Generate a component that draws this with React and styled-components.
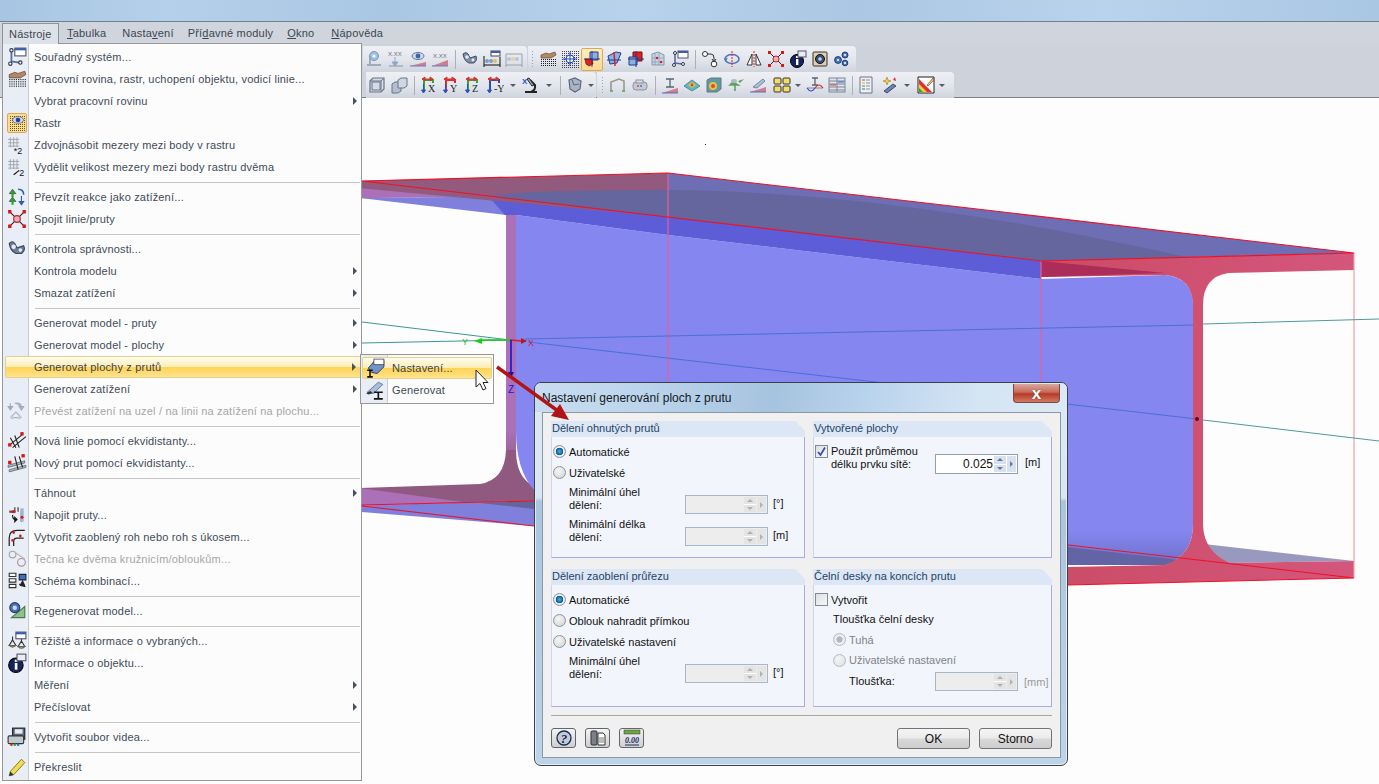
import React from 'react'
import styled, { createGlobalStyle } from 'styled-components'

const GlobalStyle = createGlobalStyle`
  html, body { margin: 0; padding: 0; background: #fff; }
  body { font-family: "Liberation Sans", Arial, sans-serif; overflow: hidden; }
  * { box-sizing: border-box; }
`

/* ---------- icons, all on an 18x18 grid ---------- */
const axisIcon = (name, c1, c2) => (
  <>
    <path d={`M4 15V4h9v3`} fill="none" stroke={c1} strokeWidth="2" />
    <path d="M2 3h9M13 3l-3-2v4zM2 3l3-2v4z" fill={c2} stroke={c2} />
    <path d="M3.5 8v8M3.5 17l-2-3h4z" fill="#2a50c8" stroke="#2a50c8" />
    <text x="8" y="16" fontSize="10" fontFamily="Liberation Serif" fill="#222">{name}</text>
  </>
)
const dots = (x, y, n, m, s, c) => {
  const out = []
  for (let i = 0; i < n; i++) for (let j = 0; j < m; j++) out.push(<rect key={`${i}-${j}`} x={x + i * s} y={y + j * s} width="1" height="1" fill={c} />)
  return out
}
const eyeShape = <><ellipse cx="9" cy="6" rx="6" ry="3.5" fill="#cfd8e8" stroke="#66788f" /><circle cx="9" cy="6" r="2.4" fill="#3d63a8" /></>

const icons = {
  coord: <><path d="M4 4v9l-1 3M4 13l7 1" fill="none" stroke="#4f6fa8" strokeWidth="1.6" /><circle cx="4" cy="3" r="1.5" fill="#fff" stroke="#334" /><circle cx="3" cy="15" r="1.5" fill="#fff" stroke="#334" /><circle cx="12" cy="14" r="1.5" fill="#fff" stroke="#334" /><rect x="7" y="1" width="10" height="7" fill="#fff" stroke="#556" /><rect x="7" y="1" width="10" height="2" fill="#3b5fa8" /></>,
  hand: <><g>{dots(2, 9, 8, 4, 2, '#222')}</g><path d="M2 5l5-2 3 1 6-2 1 3-5 3H7L2 8z" fill="#b08a68" stroke="#5c3a22" strokeWidth=".6" /></>,
  raster: <><g>{dots(2, 2, 8, 8, 2, '#6a5a20')}</g><ellipse cx="10" cy="6" rx="5.5" ry="3.4" fill="#cfd8ee" stroke="#445" strokeWidth=".6" /><circle cx="10" cy="6" r="2.3" fill="#27408a" /></>,
  gridx2: <><path d="M3 2v9M6 2v9M9 2v9M1 4h10M1 7h10M1 10h10" stroke="#9aa0a8" strokeWidth=".8" /><text x="6" y="17" fontSize="8" fill="#111">*2</text></>,
  gridd2: <><path d="M3 2v9M6 2v9M9 2v9M1 4h10M1 7h10M1 10h10" stroke="#9aa0a8" strokeWidth=".8" /><path d="M6 16l5-4" stroke="#111" /><text x="11" y="17" fontSize="8" fill="#111">2</text></>,
  react: <><path d="M5 2l-3 4h6zM5 9l-3 4h6z" fill="#3c9a3c" stroke="#1d5a1d" strokeWidth=".6" /><path d="M4 6h2v3H4zM4 13h2v3H4z" fill="#3c9a3c" /><path d="M10 2q5 0 5 5" fill="none" stroke="#2b5fb5" strokeWidth="1.4" /><path d="M13 8v7M13 16l-2-3h4z" fill="#2b5fb5" stroke="#2b5fb5" /></>,
  join: <><path d="M3 3l12 12M15 3L3 15" stroke="#222" strokeWidth="1" /><circle cx="9" cy="9" r="3" fill="#e8b0b8" stroke="#c22" /><path d="M1 1h3v3H1zM14 1h3v3h-3zM1 14h3v3H1zM14 14h3v3h-3z" fill="#d81818" /></>,
  check: <><path d="M2 4q3-3 5 0l2 4 6-2q2 4-2 7H8Q3 11 2 4z" fill="#6f7f98" stroke="#38465c" /><circle cx="6" cy="7" r="2" fill="#e8ecf4" /><circle cx="12" cy="10" r="1.6" fill="#e8ecf4" /></>,
  convert: <><path d="M3 2v5M3 8L1 5h4zM7 2q6-1 6 4M11 5h4l-2 3z" fill="#b4bcd0" stroke="#a0a8c0" /><path d="M3 15l5-5 5 5M3 15h10" fill="none" stroke="#a9b4c8" /><circle cx="5" cy="15" r="1.5" fill="#c5cede" /><circle cx="11" cy="15" r="1.5" fill="#c5cede" /></>,
  offsetLine: <><path d="M2 13L14 3M5 15L17 5M7 4l4 11M3 6l5 9" stroke="#222" /><rect x="1" y="11" width="3" height="3" fill="#d81818" /><rect x="12" y="1" width="3" height="3" fill="#d81818" /></>,
  offsetBar: <><path d="M1 11l15-4v2L1 13zM2 15l15-4v2L2 17z" fill="#aeb8c8" stroke="#555" strokeWidth=".6" /><path d="M7 3l3 12M11 3l3 10" stroke="#222" /><rect x="1" y="7" width="3" height="3" fill="#d81818" /><rect x="13" y="1" width="3" height="3" fill="#d81818" /></>,
  connectBars: <><path d="M7 2v5M10 2v4M3 6h5M13 6v9" stroke="#666" strokeWidth="1.4" /><path d="M12 3h3v12h-3z" fill="#9db6d8" /><path d="M2 5h5v2H2z" fill="#8a3a3a" /><path d="M5 9q0 5 4 4M9 13l-2-2v4z" fill="none" stroke="#111" /><circle cx="13.5" cy="11" r="1.4" fill="#d81818" /><circle cx="6" cy="6" r="1.4" fill="#d81818" /></>,
  fillet: <><path d="M2 17v-7q0-7 7-7h7M6 17v-4q0-3 3-3h6" fill="none" stroke="#222" strokeWidth="1.1" /><circle cx="6" cy="5" r="1.2" fill="#d81818" /><circle cx="12" cy="8" r="1.2" fill="#d81818" /><circle cx="5" cy="12" r="1.2" fill="#d81818" /></>,
  tangent: <><circle cx="5" cy="5" r="3" fill="none" stroke="#a5a5a5" /><circle cx="13" cy="12" r="3.5" fill="none" stroke="#b08a90" /><path d="M7 3l9 6" stroke="#b5b5b5" /></>,
  scheme: <><path d="M2 2h6v3H2zM2 7h6v3H2zM2 12h6v3H2z" fill="#fff" stroke="#333" /><path d="M11 3h6v5h-6z" fill="#3d6ec8" stroke="#223" /><path d="M11 12h5M14 9l2 5-4-1z" fill="#222" stroke="#222" /></>,
  regen: <><path d="M4 15L16 5v10z" fill="#8cc08c" stroke="#4a7a4a" /><circle cx="7" cy="6" r="4.5" fill="#4a6fb8" stroke="#223a70" /><circle cx="7" cy="6" r="2" fill="#cfd8ee" /></>,
  scales: <><path d="M5 5v3M5 8l-3 5h6zM13 5v4M13 9l-3 5h6z" fill="none" stroke="#333" /><path d="M2 13q3 3 6 0zM10 14q3 3 6 0z" fill="#c7b36a" stroke="#665" /><rect x="8" y="1" width="9" height="6" fill="#fff" stroke="#556" /><rect x="8" y="1" width="9" height="2" fill="#3b5fa8" /></>,
  info: <><circle cx="8" cy="11" r="6.5" fill="#15245c" stroke="#000" /><rect x="7" y="9" width="2.4" height="6" fill="#fff" /><rect x="7" y="6" width="2.4" height="2" fill="#fff" /><rect x="9" y="1" width="8" height="6" fill="#e8ecf4" stroke="#556" /></>,
  film: <><rect x="5" y="1" width="11" height="10" fill="#5c6a80" stroke="#222" /><rect x="7" y="2" width="7" height="4" fill="#e8ecf4" /><rect x="1" y="8" width="14" height="7" rx="1" fill="#c4c8d0" stroke="#333" /><path d="M3 15h2v2H3z" fill="#d22" /><path d="M6 15h2v2H6z" fill="#2a2" /><path d="M9 15h2v2H9z" fill="#27c" /></>,
  pencil: <><path d="M3 13L13 2l3 3L6 16l-4 1z" fill="#f2dc50" stroke="#7c6a20" strokeWidth=".8" /><path d="M2 17l1-4 3 3z" fill="#333" /></>,
  surfSet: <><path d="M3 9l6-7h8v6l-6 6-5-1z" fill="#6f94c8" stroke="#223" strokeWidth=".7" /><rect x="8" y="1" width="9" height="5" fill="#fff" stroke="#445" strokeWidth=".7" /><path d="M2 11h5M2 17h5M4.5 11v6" stroke="#111" strokeWidth="1.4" /></>,
  surfGen: <><path d="M2 11L12 2l4 2-8 8z" fill="#a6bee0" stroke="#567" strokeWidth=".7" /><path d="M8 11h8M8 17h8M12 11v6" stroke="#111" strokeWidth="1.5" /><path d="M1 12l4-2 2 2-4 1z" fill="#333" /></>,

  probe: <><circle cx="9" cy="6" r="4.5" fill="#9fc0e6" stroke="#7a98bc" /><circle cx="9" cy="6" r="1.6" fill="#fff" /><path d="M5 6v8M2 15h14" stroke="#8a9ab0" strokeWidth="1.5" /></>,
  xxDown: <><text x="1" y="6" fontSize="6" fill="#6a7080">X.XX</text><path d="M8 7v8M8 16l-3-4h6z" fill="#8ea8c8" stroke="#8ea8c8" /><path d="M2 16h14" stroke="#8a94a4" /></>,
  eyeLine: <>{eyeShape}<path d="M1 16L17 12v4z" fill="#cc7f8c" /><path d="M1 16h16" stroke="#6a7ac8" /></>,
  xxLine: <><text x="2" y="8" fontSize="6" fill="#6a7080">X.XX</text><path d="M1 16L17 10v6z" fill="#cc7f8c" /><path d="M1 16h16" stroke="#6a7ac8" /></>,
  wrench: <><path d="M2 4q3-3 5 0l2 4 6-2q2 4-2 7H8Q3 11 2 4z" fill="#7f8da6" stroke="#3f4e68" /><circle cx="6" cy="7" r="1.8" fill="#e8ecf4" /><circle cx="12" cy="10" r="1.4" fill="#e8ecf4" /></>,
  abacus: <><rect x="8" y="1" width="9" height="5" fill="#fff" stroke="#445" /><rect x="8" y="1" width="9" height="2" fill="#3b5fa8" /><path d="M1 6v11M17 7v10M1 15h16" stroke="#111" /><circle cx="4" cy="11" r="2" fill="#7f9ccf" /><circle cx="8" cy="11" r="2" fill="#7f9ccf" /><circle cx="12" cy="11" r="2" fill="#e0c060" /></>,
  abacus2: <><path d="M1 4v13M17 4v13M1 15h16M1 4h16" stroke="#9aa0aa" /><circle cx="4" cy="9" r="2" fill="#b8c4dc" /><circle cx="8" cy="9" r="2" fill="#e2d29c" /><circle cx="12" cy="9" r="2" fill="#b8c4dc" /></>,
  targetGrid: <><g>{dots(1, 1, 9, 9, 2, '#444')}</g><circle cx="9" cy="9" r="4" fill="#fff" stroke="#1e46c0" /><path d="M9 2v14M2 9h14" stroke="#1e46c0" /></>,
  planeA: <><path d="M7 2h8v8H9L7 8z" fill="#8db0de" stroke="#1d3f90" /><path d="M2 9h7l1 5-4 2-3-2z" fill="#e02020" stroke="#7a1010" strokeWidth=".7" /><path d="M9 1v16M1 9h16" stroke="#142a80" strokeWidth=".8" /></>,
  planeB: <><path d="M3 6l8-4 5 1-4 10-7 1z" fill="#8db0de" stroke="#1d3f90" /><path d="M9 2l1 14" stroke="#e02020" strokeWidth="1.5" /><path d="M2 10h14" stroke="#1d3f90" /></>,
  planeC: <><path d="M6 2h9v9H6z" fill="#e02020" stroke="#701010" /><path d="M2 7h8v8H2z" fill="#8db0de" stroke="#1d3f90" /><path d="M9 1v16M1 9h16" stroke="#1d3f90" /></>,
  gridRed: <><path d="M3 4l6-2 6 3v10H3z" fill="#c8d4e8" stroke="#8898b0" /><path d="M6 3v12M10 3v12M3 8h12M3 12h12" stroke="#8898b0" strokeWidth=".7" /><circle cx="8" cy="8" r="1.2" fill="#d82020" /><circle cx="12" cy="12" r="1.2" fill="#d82020" /></>,
  route: <><circle cx="4" cy="4" r="2.5" fill="#fff" stroke="#333" /><circle cx="13" cy="14" r="2.8" fill="#fff" stroke="#333" /><path d="M6 4h4q3 0 3 4v3M11 9l2 3 2-3" fill="none" stroke="#333" /></>,
  rotate: <><ellipse cx="9" cy="9" rx="7" ry="4.5" fill="none" stroke="#4f74b8" strokeWidth="1.6" /><path d="M9 1v16" stroke="#e02020" strokeDasharray="2 1" /><path d="M1 9l4-1-2 3z" fill="#4f74b8" /></>,
  mirror: <><path d="M7 4v11H2zM11 4v11h5z" fill="#fff" stroke="#333" /><path d="M9 1v16" stroke="#e02020" strokeDasharray="2 1" /></>,
  gearBox: <><rect x="2" y="2" width="14" height="14" rx="1" fill="#e0cfa8" stroke="#333" /><circle cx="9" cy="9" r="4.5" fill="#33507c" stroke="#111" /><circle cx="9" cy="9" r="1.8" fill="#c8d4e8" /></>,
  gears: <><circle cx="5" cy="10" r="3.4" fill="#4a78bc" stroke="#1f3a70" /><circle cx="12" cy="5" r="3" fill="#4a78bc" stroke="#1f3a70" /><circle cx="12" cy="13" r="2.8" fill="#4a78bc" stroke="#1f3a70" /><circle cx="5" cy="10" r="1" fill="#fff" /><circle cx="12" cy="5" r="1" fill="#fff" /><circle cx="12" cy="13" r="1" fill="#fff" /></>,
  wire: <><path d="M2 5l3-3h11v11l-3 3H2z" fill="#d4dbe6" stroke="#6a7488" strokeWidth="1.2" /><path d="M4 6h8v8H4zM2 5h11v11M13 5l3-3" fill="none" stroke="#6a7488" /></>,
  solid: <><path d="M2 8l3-2h6v9l-3 2H2z" fill="#b4bed0" stroke="#6a7488" /><path d="M8 4l3-2h6v8l-3 2H8z" fill="#ced6e2" stroke="#6a7488" /></>,
  axX: axisIcon('X', '#2fa53a', '#e03030'),
  axY: axisIcon('Y', '#d03030', '#e03030'),
  axZ: axisIcon('Z', '#2fa53a', '#e03030'),
  axMY: axisIcon('-Y', '#2b4f9c', '#e03030'),
  scope: <><path d="M3 16h12M9 16q5-2 4-7L8 4" fill="none" stroke="#222" strokeWidth="2" /><path d="M7 2l5 7-2 1-5-7z" fill="#9aa4b4" stroke="#222" /><text x="0" y="8" fontSize="8" fontWeight="bold" fill="#2a50c8">X</text></>,
  shell: <><path d="M3 4l6-2 6 3-1 8-5 3-5-3z" fill="#aab4c4" stroke="#5c6678" strokeWidth="1.2" /><path d="M6 4l2 5 5-1" fill="none" stroke="#5c6678" /></>,
  frame: <><path d="M2 15V6l8-3 5 2v10" fill="none" stroke="#9c9890" strokeWidth="1.6" /><path d="M1 15h3M13 15h3" stroke="#5fa05f" strokeWidth="1.6" /></>,
  pill: <><rect x="2" y="6" width="14" height="8" rx="3" fill="#c4c9d2" stroke="#8c929c" /><rect x="5" y="4" width="7" height="3" fill="#dde0e6" stroke="#8c929c" /><path d="M6 10h2" stroke="#c05050" strokeWidth="1.4" /><path d="M9 10h2" stroke="#5070c0" strokeWidth="1.4" /></>,
  beamLoad: <><path d="M9 3v8M5 3h8M5 11h8" stroke="#5a6474" strokeWidth="1.3" /><path d="M1 17L17 12v5z" fill="#cc7f8c" /><path d="M1 17h16" stroke="#5a6ac8" /></>,
  mapSurf: <><path d="M1 10l8-6 8 6-8 5z" fill="#4ec0c0" stroke="#6a8498" /><path d="M5 9l4-3 4 3-4 3z" fill="#f0b84a" /><circle cx="9" cy="9" r="1.4" fill="#e04030" /></>,
  heat: <><path d="M2 4l4-2h10v11l-4 3H2z" fill="#5c9c9a" stroke="#6a7488" /><circle cx="8" cy="10" r="4" fill="#e8c050" /><circle cx="8" cy="10" r="2" fill="#e04a30" /></>,
  loadsUp: <><path d="M6 6l-3 3h8zM8 15V9" fill="#5fa05f" stroke="#5fa05f" strokeWidth="1.6" /><path d="M17 3l-6 2 2 2z" fill="#5fa05f" /><ellipse cx="7" cy="5" rx="3" ry="2" fill="#b0b8c8" /></>,
  lens: <><path d="M4 11L14 3l2 2-8 7z" fill="#a6bee0" stroke="#788aa0" /><path d="M1 16L17 11v5z" fill="#cc7f8c" /><path d="M1 16h16" stroke="#5a6ac8" /></>,
  yellow4: <><rect x="1" y="2" width="7" height="6" rx="1" fill="#f4dc68" stroke="#333" /><rect x="10" y="2" width="7" height="6" rx="1" fill="#f4dc68" stroke="#333" /><rect x="1" y="10" width="7" height="6" rx="1" fill="#f4dc68" stroke="#333" /><rect x="10" y="10" width="7" height="6" rx="1" fill="#f4dc68" stroke="#333" /></>,
  curve: <><path d="M6 2h6M6 9h6M9 2v7" stroke="#5a6474" strokeWidth="1.3" /><path d="M1 12h16" stroke="#888" /><path d="M1 12q4 6 8 0" fill="none" stroke="#2b50c8" strokeWidth="1.2" /><path d="M9 12q4-6 8 0" fill="none" stroke="#d83030" strokeWidth="1.2" /></>,
  table: <><rect x="1" y="2" width="16" height="14" fill="#dfe4ec" stroke="#7c8696" /><path d="M1 5h16M1 8h16M1 11h16M1 14h16M9 2v14" stroke="#7c8696" /><path d="M2 9h6" stroke="#d04040" /><path d="M10 6h6" stroke="#4060c0" /></>,
  list: <><path d="M3 1h12v16H3z" fill="#eef0f4" stroke="#6e7684" /><path d="M5 4h3" stroke="#d04040" /><path d="M5 7h3" stroke="#e0b030" /><path d="M5 10h3" stroke="#40a040" /><path d="M5 13h3" stroke="#4060c0" /><path d="M9 4h4M9 7h4M9 10h4M9 13h4" stroke="#8a92a0" /></>,
  wand: <><path d="M2 15l9-7 3 2-9 7z" fill="#6484c0" stroke="#223" strokeWidth=".7" /><path d="M5 1l1 3 3 1-3 1-1 3-1-3-3-1 3-1z" fill="#f0d040" stroke="#8a7010" strokeWidth=".5" /><path d="M13 1l1 4-3-1z" fill="#d83030" /></>,
  colors: <><path d="M1 1h16v16H1z" fill="#fff" stroke="#222" /><path d="M2 16V3l13 13z" fill="#e03030" /><path d="M2 16V8l8 8z" fill="#f0d030" /><path d="M2 16v-4l4 4z" fill="#30a040" /><path d="M10 9l6-7 1 2-6 6z" fill="#f0c850" stroke="#604" strokeWidth=".5" /></>,
  help: <><circle cx="9" cy="9" r="7" fill="#c4cbd8" stroke="#1a2a50" strokeWidth="1.3" /><text x="9" y="14" fontSize="13" fontWeight="bold" fontStyle="italic" textAnchor="middle" fontFamily="Liberation Serif" fill="#14244c">?</text></>,
  doc: <><rect x="2" y="2" width="6" height="14" rx="1" fill="#7a7f88" stroke="#333" /><path d="M9 4h5l2 2v10H9z" fill="#fff" stroke="#333" /><path d="M10 9h5M10 11h5M10 13h5" stroke="#555" strokeWidth=".8" /></>,
  number: <><rect x="1" y="1" width="16" height="4" fill="#6ca63c" stroke="#335" strokeWidth=".5" /><text x="9" y="14" fontSize="8" fontStyle="italic" fontWeight="bold" textAnchor="middle" fontFamily="Liberation Serif" fill="#1a2a60">0.00</text><path d="M2 16h14" stroke="#1a2a60" /></>,
}

const Icon = ({ name, size = 18 }) => (
  <svg width={size} height={size} viewBox="0 0 18 18">
    {icons[name]}
  </svg>
)

/* ---------- window chrome ---------- */
const Screen = styled.div`
  position: relative;
  width: 1379px;
  height: 784px;
  overflow: hidden;
  display: flex;
  flex-direction: column;
  background: #ced2da;
`

const TitleStrip = styled.div`
  height: 22px;
  flex: none;
  border-bottom: 1px solid #6e8194;
  background: linear-gradient(90deg, #a7c5e2 0, #b5d0ea 12%, #a9c6e3 28%, #b8d2eb 46%, #abc7e3 62%, #bad3ec 80%, #a9c6e3 100%);
`

const MenuBar = styled.div`
  height: 22px;
  flex: none;
  display: flex;
  align-items: flex-end;
  padding-left: 2px;
  background: #d0d4dc;
`

const MenuTitle = styled.div`
  font-size: 11px;
  letter-spacing: 0.2px;
  color: #3d4653;
  height: 21px;
  line-height: 20px;
  padding: 0 7px;
  margin-right: ${p => p.$gap}px;
  ${p => p.$open && `
    position: relative;
    z-index: 6;
    width: 57px;
    background: #dde1e8;
    border: 1px solid #8e9299;
    border-bottom: none;
    padding: 0 6px;
  `}
`

const ToolArea = styled.div`
  height: 54px;
  flex: none;
  border-bottom: 1px solid #7d8187;
  background: #ced2da;
  padding-top: 2px;
`

const ToolRow = styled.div`
  display: flex;
  height: 26px;
  padding-left: ${p => p.$left}px;
`

const ToolGroup = styled.div`
  display: flex;
  align-items: center;
  height: 26px;
  padding-right: ${p => p.$pad || 0}px;
  border-radius: 0 4px 0 0;
  background: linear-gradient(180deg, #eef0f5 0, #e2e5ec 55%, #cfd3dc 100%);
`

const ToolButton = styled.div`
  width: 22px;
  height: 23px;
  flex: none;
  display: flex;
  align-items: center;
  justify-content: center;
  border-radius: 2px;
  ${p => p.$active && 'background: linear-gradient(180deg, #fdeec0, #fbd88e); border: 1px solid #e3a64e;'}
`

const ToolSep = styled.div`
  width: ${p => p.$w}px;
  height: 19px;
  flex: none;
  position: relative;
  &::after {
    content: "";
    position: absolute;
    left: 50%;
    top: 0;
    bottom: 0;
    width: 1px;
    background: #aab0ba;
  }
`

const ToolGrip = styled.div`
  width: ${p => p.$w}px;
  height: 18px;
  flex: none;
  background: radial-gradient(circle, #9ba2ad 0.8px, transparent 1px) center top / 3px 3px repeat-y;
`

const ToolDrop = styled.div`
  width: ${p => p.$w}px;
  flex: none;
  display: flex;
  justify-content: center;
  &::after {
    content: "";
    border: 3px solid transparent;
    border-top: 3px solid #555c68;
    border-bottom: none;
  }
`

const Spacer = styled.div`
  width: ${p => p.$w}px;
  flex: none;
`

const Viewport = styled.div`
  position: relative;
  flex: 1;
  background: #fdfdfd;
  overflow: hidden;
`

const ModelSvg = styled.svg`
  position: absolute;
  left: 0;
  top: 0;
  width: 1379px;
  height: 686px;
`

/* ---------- menus ---------- */
const DropMenu = styled.div`
  position: absolute;
  left: 2px;
  top: 43px;
  width: 360px;
  height: 738px;
  z-index: 5;
  padding: 2px 0 0 1px;
  border: 1px solid #979797;
  background: linear-gradient(90deg, #e9eef6 0, #e9eef6 25px, #c6cad1 25px, #c6cad1 26px, #fcfcfc 26px);
`

const MenuItem = styled.div`
  position: relative;
  height: 22px;
  display: flex;
  align-items: center;
  font-size: 11px;
  letter-spacing: 0.18px;
  color: ${p => (p.$disabled ? '#a6a6a6' : '#414b58')};
  ${p => p.$active && `
    margin: 0 0 0 1px;
    border: 1px solid #e6d08c;
    background: linear-gradient(180deg, #fefdf0 0, #fcedb6 48%, #ffd452 50%, #ffe38e 100%);
    border-radius: 2px;
    color: #3b4350;
  `}
`

const MenuIconCell = styled.div`
  width: ${p => p.$w}px;
  height: 22px;
  flex: none;
  display: flex;
  align-items: center;
  justify-content: center;
  padding-right: 2px;
`

const RasterBox = styled.div`
  width: 20px;
  height: 20px;
  display: flex;
  align-items: center;
  justify-content: center;
  border: 1px solid #e3a64e;
  border-radius: 2px;
  background: #fbdc94;
`

const MenuLabel = styled.span`
  flex: 1;
  padding-left: 3px;
  white-space: nowrap;
`

const SubArrow = styled.span`
  width: 0;
  height: 0;
  margin-right: 4px;
  border-left: 4px solid #4a5260;
  border-top: 4px solid transparent;
  border-bottom: 4px solid transparent;
`

const MenuSep = styled.div`
  height: 8px;
  margin-left: 31px;
  margin-right: 1px;
  display: flex;
  align-items: center;
  &::after {
    content: "";
    flex: 1;
    height: 1px;
    background: #c6c6c6;
  }
`

const SubMenu = styled.div`
  position: absolute;
  left: 360px;
  top: 354px;
  width: 134px;
  height: 50px;
  z-index: 7;
  padding: 2px 1px;
  border: 1px solid #979797;
  background: linear-gradient(90deg, #e9eef6 0, #e9eef6 26px, #c6cad1 26px, #c6cad1 27px, #fcfcfc 27px);
`

const SubItem = styled(MenuItem)`
  ${p => p.$active && 'margin: 0;'}
  height: 22px;
`

const SubLabel = styled.span`
  padding-left: 3px;
`

/* ---------- dialog ---------- */
const Dialog = styled.div`
  position: absolute;
  left: 534px;
  top: 382px;
  width: 534px;
  height: 384px;
  z-index: 8;
  display: flex;
  flex-direction: column;
  padding: 0 6px 7px 7px;
  border: 1px solid #3c4149;
  border-radius: 7px;
  background: linear-gradient(180deg, #dce9f4 0, #d7e6f3 30%, #a9c5de 31%, #bcd3e8 100%);
  box-shadow: 0 0 0 1px #e4ecf4 inset;
`

const DialogTitle = styled.div`
  height: 29px;
  flex: none;
  margin: 0 -6px 0 -7px;
  padding: 8px 0 0 7px;
  display: flex;
  justify-content: space-between;
  border-radius: 6px 6px 0 0;
  font-size: 12px;
  line-height: 15px;
  color: #14181e;
  background: linear-gradient(100deg, #c8dcef 0, #bcd5ec 20%, #a6c3df 45%, #b8d3ec 62%, #d3e4f3 82%, #dbe9f5 100%);
`

const CloseBtn = styled.div`
  width: 47px;
  height: 19px;
  margin: -7px 7px 0 0;
  display: flex;
  align-items: center;
  justify-content: center;
  border: 1px solid #7a4a44;
  border-top: none;
  border-radius: 0 0 4px 4px;
  background: linear-gradient(180deg, #d9a79d 0, #c66c5c 45%, #b93a26 55%, #cf7a66 100%);
  color: #fff;
  font-weight: bold;
  font-size: 17px;
  line-height: 1;
  text-shadow: 0 0 1px #333;
`

const DialogPanel = styled.div`
  flex: 1;
  display: flex;
  flex-direction: column;
  padding: 8px 8px 0;
  border: 1px solid #8b98a5;
  background: #f0f0f0;
  font-size: 11px;
  color: #111;
`

const GroupGrid = styled.div`
  display: grid;
  grid-template-columns: 254px 239px;
  grid-template-rows: 137px 138px;
  column-gap: 8px;
  row-gap: 11px;
`

const GroupBox = styled.div`
  display: flex;
  flex-direction: column;
`

const GroupHead = styled.div`
  height: 16px;
  flex: none;
  padding-left: 1px;
  font-size: 11px;
  line-height: 15px;
  color: #1d4468;
  background: #dce6f4;
  clip-path: polygon(0 0, calc(100% - 10px) 0, 100% 10px, 100% 100%, 0 100%);
`

const GroupBody = styled.div`
  flex: 1;
  padding: ${p => p.$top || 4}px 0 0 1px;
  border-left: 1px solid #d0d3f2;
  border-right: 1px solid #a9a9ec;
  border-bottom: 1px solid #a9a9ec;
  background: #f2f5fb;
`

const Option = styled.div`
  height: ${p => p.$h || 21}px;
  display: flex;
  align-items: center;
  gap: 3px;
  color: ${p => (p.$muted ? '#7f8388' : 'inherit')};
`

const RadioMark = styled.span`
  width: 13px;
  height: 13px;
  flex: none;
  border-radius: 50%;
  border: 1px solid #8f949b;
  background: ${p =>
    p.$on
      ? 'radial-gradient(circle, #4ab0e8 0, #0c5a90 45%, #eef1f5 52%, #d0d3d8 100%)'
      : 'radial-gradient(circle at 40% 35%, #f6f6f6 0, #d0d0d0 100%)'};
  ${p => p.$muted && 'opacity: 0.6;'}
  ${p => p.$muted && p.$on && 'background: radial-gradient(circle, #8a8f96 0, #8a8f96 36%, #eceef1 44%, #d8dbe0 100%);'}
`

const CheckMark = styled.span`
  width: 13px;
  height: 13px;
  flex: none;
  display: flex;
  align-items: center;
  justify-content: center;
  border: 1px solid #858a92;
  background: linear-gradient(135deg, #dcdfe4, #f7f8f9);
`

const FieldRow = styled.div`
  display: flex;
  align-items: flex-start;
  margin-top: ${p => p.$top}px;
  margin-left: ${p => p.$left || 16}px;
`

const FieldLabel = styled.div`
  width: ${p => p.$w || 116}px;
  flex: none;
  line-height: ${p => p.$lh || 13}px;
  margin-top: ${p => p.$top || 0}px;
`

const SpinBox = styled.div`
  width: ${p => p.$w || 83}px;
  height: ${p => p.$h || 19}px;
  margin-top: ${p => p.$top ?? 9}px;
  flex: none;
  display: flex;
  align-items: center;
  padding: 1px;
  border: 1px solid ${p => (p.$off ? '#a9b6c5' : '#8fa0b5')};
  background: ${p => (p.$off ? '#ededed' : '#fff')};
`

const SpinValue = styled.span`
  flex: 1;
  font-size: 12px;
  text-align: right;
  padding-right: 1px;
`

const SpinPair = styled.span`
  width: 12px;
  height: 100%;
  flex: none;
  display: flex;
  flex-direction: column;
  gap: 1px;
  background: #fff;
`

const SpinHalf = styled.span`
  flex: 1;
  display: flex;
  align-items: center;
  justify-content: center;
  background: ${p => (p.$off ? '#e4e4e4' : '#dbe1ec')};
  &::after {
    content: "";
    border: 3px solid transparent;
    border-${p => (p.$down ? 'bottom' : 'top')}: none;
    border-${p => (p.$down ? 'top' : 'bottom')}: 3px solid ${p => (p.$off ? '#b0b0b0' : '#5c78b8')};
  }
`

const SpinNext = styled.span`
  width: 9px;
  height: 100%;
  margin-left: 1px;
  flex: none;
  display: flex;
  align-items: center;
  justify-content: center;
  background: ${p => (p.$off ? '#e4e4e4' : '#dbe1ec')};
  &::after {
    content: "";
    border: 3px solid transparent;
    border-right: none;
    border-left: 3px solid ${p => (p.$off ? '#b0b0b0' : '#5c78b8')};
  }
`

const Unit = styled.span`
  margin: ${p => p.$top ?? 11}px 0 0 ${p => p.$left || 5}px;
  line-height: 13px;
  color: ${p => (p.$muted ? '#9a9a9a' : 'inherit')};
`

const CheckRow = styled.div`
  display: flex;
  align-items: flex-start;
`

const CheckLabel = styled.div`
  width: 107px;
  padding-left: 3px;
  line-height: 13px;
`

const SubBlock = styled.div`
  margin-left: 18px;
`

const PlainLine = styled.div`
  height: 19px;
  line-height: 19px;
`

const FooterLine = styled.div`
  height: 1px;
  margin-top: 8px;
  background: #a7a7a7;
`

const Footer = styled.div`
  display: flex;
  align-items: flex-start;
  padding-top: 12px;
`

const IconButton = styled.div`
  width: 25px;
  height: 20px;
  margin-right: 9px;
  display: flex;
  align-items: center;
  justify-content: center;
  border: 1px solid #5f6670;
  border-radius: 3px;
  background: linear-gradient(180deg, #f4f4f4, #cfcfcf);
`

const PushButton = styled.div`
  width: 73px;
  height: 21px;
  margin-left: ${p => p.$left}px;
  text-align: center;
  font-size: 12px;
  line-height: 20px;
  border: 1px solid #6f747b;
  border-radius: 3px;
  background: linear-gradient(180deg, #f5f5f5 0, #ebebeb 48%, #d9d9d9 52%, #cdcdcd 100%);
`

const OverlaySvg = styled.svg`
  position: absolute;
  left: 0;
  top: 0;
  width: 1379px;
  height: 784px;
  z-index: 9;
  pointer-events: none;
`

/* ---------- data ---------- */
const sep = w => ({ sep: w })
const gap = w => ({ gap: w })
const drop = w => ({ drop: w })
const grip = w => ({ grip: w })

const rowOneA = ['probe', 'xxDown', 'eyeLine', 'xxLine', sep(8), 'wrench', 'abacus', 'abacus2']
const rowOneB = [grip(9), 'hand', 'targetGrid', { icon: 'planeA', active: true }, 'planeB', 'planeC', 'gridRed', 'coord', sep(8), 'route', 'rotate', 'mirror', 'join', 'info', 'gearBox', 'gears']
const rowTwoA = ['wire', 'solid', sep(8), 'axX', 'axY', 'axZ', 'axMY', drop(14), 'scope', drop(14), sep(8), 'shell', drop(10)]
const rowTwoB = [grip(10), 'frame', 'pill', sep(8), 'beamLoad', 'mapSurf', 'heat', 'loadsUp', 'lens', gap(2), 'yellow4', drop(10), gap(1), 'curve', 'table', sep(7), 'list', gap(3), 'wand', drop(10), gap(3), 'colors', drop(10)]

const menuItems = [
  { label: 'Souřadný systém...', icon: 'coord' },
  { label: 'Pracovní rovina, rastr, uchopení objektu, vodicí linie...', icon: 'hand' },
  { label: 'Vybrat pracovní rovinu', arrow: true },
  { label: 'Rastr', icon: 'raster', boxed: true },
  { label: 'Zdvojnásobit mezery mezi body v rastru', icon: 'gridx2' },
  { label: 'Vydělit velikost mezery mezi body rastru dvěma', icon: 'gridd2' },
  null,
  { label: 'Převzít reakce jako zatížení...', icon: 'react' },
  { label: 'Spojit linie/pruty', icon: 'join' },
  null,
  { label: 'Kontrola správnosti...', icon: 'check' },
  { label: 'Kontrola modelu', arrow: true },
  { label: 'Smazat zatížení', arrow: true },
  null,
  { label: 'Generovat model - pruty', arrow: true },
  { label: 'Generovat model - plochy', arrow: true },
  { label: 'Generovat plochy z prutů', arrow: true, active: true },
  { label: 'Generovat zatížení', arrow: true },
  { label: 'Převést zatížení na uzel / na linii na zatížení na plochu...', icon: 'convert', disabled: true },
  null,
  { label: 'Nová linie pomocí ekvidistanty...', icon: 'offsetLine' },
  { label: 'Nový prut pomocí ekvidistanty...', icon: 'offsetBar' },
  null,
  { label: 'Táhnout', arrow: true },
  { label: 'Napojit pruty...', icon: 'connectBars' },
  { label: 'Vytvořit zaoblený roh nebo roh s úkosem...', icon: 'fillet' },
  { label: 'Tečna ke dvěma kružnicím/obloukům...', icon: 'tangent', disabled: true },
  { label: 'Schéma kombinací...', icon: 'scheme' },
  null,
  { label: 'Regenerovat model...', icon: 'regen' },
  null,
  { label: 'Těžiště a informace o vybraných...', icon: 'scales' },
  { label: 'Informace o objektu...', icon: 'info' },
  { label: 'Měření', arrow: true },
  { label: 'Přečíslovat', arrow: true },
  null,
  { label: 'Vytvořit soubor videa...', icon: 'film' },
  null,
  { label: 'Překreslit', icon: 'pencil' },
]

/* ---------- parts ---------- */
function Tools({ list }) {
  return list.map((t, i) => {
    if (typeof t === 'string') return <ToolButton key={i}><Icon name={t} /></ToolButton>
    if (t.sep) return <ToolSep key={i} $w={t.sep} />
    if (t.gap) return <Spacer key={i} $w={t.gap} />
    if (t.drop) return <ToolDrop key={i} $w={t.drop} />
    if (t.grip) return <ToolGrip key={i} $w={t.grip} />
    return <ToolButton key={i} $active={t.active}><Icon name={t.icon} /></ToolButton>
  })
}

function Spinner({ off = true, value, w, h, top }) {
  return (
    <SpinBox $off={off} $w={w} $h={h} $top={top}>
      <SpinValue>{value}</SpinValue>
      <SpinPair>
        <SpinHalf $off={off} />
        <SpinHalf $off={off} $down />
      </SpinPair>
      <SpinNext $off={off} />
    </SpinBox>
  )
}

const Radio = ({ on, muted, label }) => (
  <Option $muted={muted}>
    <RadioMark $on={on} $muted={muted} />
    <span>{label}</span>
  </Option>
)

const Tick = () => (
  <svg width="11" height="11" viewBox="0 0 11 11">
    <path d="M2 6l2.5 3L9 1.5" fill="none" stroke="#3a4fa8" strokeWidth="1.8" />
  </svg>
)

function Model() {
  return (
    <ModelSvg viewBox="0 98 1379 686">
      <defs>
        <linearGradient id="webBottom" x1="0" y1="0" x2="0" y2="1">
          <stop offset="0.9" stopColor="#8686f0" />
          <stop offset="1" stopColor="#6e70c8" />
        </linearGradient>
        <linearGradient id="frontFace" x1="0" y1="0" x2="1" y2="0">
          <stop offset="0" stopColor="#cb4c66" />
          <stop offset="1" stopColor="#d4567c" />
        </linearGradient>
        <linearGradient id="webPurple" x1="0" y1="0" x2="0" y2="1">
          <stop offset="0.85" stopColor="#ab70b8" />
          <stop offset="1" stopColor="#905a80" />
        </linearGradient>
      </defs>

      {/* far end of the section */}
      <path d="M300 174L490 196.5L300 199z" fill="#ab70b8" />
      <path d="M300 191L506 215L490 196.5L362 198z" fill="#7f7fdc" />
      <path d="M506 210H516V470H506z" fill="url(#webPurple)" />
      <path d="M300 490L480 484Q505 480 506 450H516Q516 478 534 486V501L300 507z" fill="#905a80" />
      <path d="M300 480L463 502L300 507z" fill="#ab70b8" />
      <path d="M300 507L534 501V526z" fill="#7f7fdc" />
      <path d="M480 503L534 501V509z" fill="#65659e" />

      {/* web seen from inside */}
      <path d="M516 215L668 235L1041 279L1165 275Q1193 278 1193 305V525Q1193 555 1165 565H534V490Q516 470 516 430z" fill="url(#webBottom)" />
      <path d="M516 215L668 235L1041 279V261L668 217L488 196L505 215z" fill="#5d5dd8" />

      {/* upper flange surface */}
      <path d="M300 182.5L668 173V217z" fill="#925a7d" />
      <path d="M668 173L1354 253L1041 261L668 217z" fill="#6d6eb3" />
      <path d="M490 196.5Q512 190 668 190V217z" fill="#66669e" />
      <path d="M668 190Q900 192 1190 258L1041 261L668 217z" fill="#66669e" />

      {/* lower flange under the web */}
      <path d="M1068 547L1180 560L1165 565H1068z" fill="#6264a5" />
      <path d="M1204 544L1354 561L1230 563Q1210 556 1204 544z" fill="#9999bf" />

      {/* near end of the section */}
      <path d="M1041 261L1354 253V270L1228 273Q1203 277 1203 305V525Q1204 552 1230 563L1354 561V578L1068 585V567L1165 565Q1193 555 1193 525V305Q1192 277 1165 275L1041 277z" fill="url(#frontFace)" />
      <path d="M1041 261L1165 273L1041 277z" fill="#ac2d5a" />

      {/* member edges */}
      <path d="M668 173V382M1041 261V382" stroke="#e3609c" strokeWidth="1.2" />
      <path d="M1354 253V578" stroke="#f49aa6" strokeWidth="1.2" />
      <g stroke="#f01024" strokeWidth="1.1" fill="none">
        <path d="M362 181L668 173L1354 253L1041 261L362 181" />
        <path d="M1068 545L1354 578L1068 585" />
        <path d="M362 505L534 501M362 506L534 526" />
      </g>

      {/* member axis lines */}
      <path d="M362 322L510 340M362 343L510 340" stroke="#3f9595" />
      <path d="M528 342L1197 419M525 339L1193 325" stroke="#4a6fd8" />
      <path d="M1203 420L1379 441M1203 324L1379 319" stroke="#4f9a9c" />
      <circle cx="1197" cy="419" r="2" fill="#5a0c20" />
      <rect x="705" y="144" width="1" height="1" fill="#111" />

      {/* local axes */}
      <path d="M510 340H480" stroke="#16d016" strokeWidth="1.6" />
      <path d="M474 341l8-3v6z" fill="#16d016" />
      <path d="M510 340L522 341" stroke="#e01818" strokeWidth="1.6" />
      <path d="M527 341l-6-3v6z" fill="#b81818" />
      <path d="M511 340V376" stroke="#1414d8" strokeWidth="1.6" />
      <path d="M511 378l-3-6h6z" fill="#1414a0" />
      <text x="462" y="345" fontSize="9" fill="#18c018" fontFamily="Liberation Sans">Y</text>
      <text x="528" y="346" fontSize="9" fill="#d02040" fontFamily="Liberation Sans">X</text>
      <text x="508" y="393" fontSize="10" fill="#1414e0" fontFamily="Liberation Sans">Z</text>
    </ModelSvg>
  )
}

export default function App() {
  return (
    <Screen>
      <GlobalStyle />
      <TitleStrip />
      <MenuBar>
        <MenuTitle $open $gap={1}>Nástro<u>j</u>e</MenuTitle>
        <MenuTitle $gap={2}><u>T</u>abulka</MenuTitle>
        <MenuTitle $gap={0}>Nasta<u>v</u>ení</MenuTitle>
        <MenuTitle $gap={0}>Pří<u>d</u>avné moduly</MenuTitle>
        <MenuTitle $gap={3}><u>O</u>kno</MenuTitle>
        <MenuTitle $gap={0}><u>N</u>ápověda</MenuTitle>
      </MenuBar>
      <ToolArea>
        <ToolRow $left={363}>
          <ToolGroup $pad={2}><Tools list={rowOneA} /></ToolGroup>
          <Spacer $w={1} />
          <ToolGroup $pad={3}><Tools list={rowOneB} /></ToolGroup>
        </ToolRow>
        <ToolRow $left={366}>
          <ToolGroup><Tools list={rowTwoA} /></ToolGroup>
          <Spacer $w={1} />
          <ToolGroup $pad={7}><Tools list={rowTwoB} /></ToolGroup>
        </ToolRow>
      </ToolArea>
      <Viewport>
        <Model />
      </Viewport>

      <DropMenu>
        {menuItems.map((m, i) =>
          m === null ? (
            <MenuSep key={i} />
          ) : (
            <MenuItem key={i} $active={m.active} $disabled={m.disabled}>
              <MenuIconCell $w={m.active ? 25 : 27}>
                {m.boxed ? (
                  <RasterBox><Icon name={m.icon} /></RasterBox>
                ) : (
                  m.icon && <Icon name={m.icon} size={20} />
                )}
              </MenuIconCell>
              <MenuLabel>{m.label}</MenuLabel>
              {m.arrow && <SubArrow />}
            </MenuItem>
          )
        )}
      </DropMenu>

      <SubMenu>
        <SubItem $active>
          <MenuIconCell $w={26}><Icon name="surfSet" size={20} /></MenuIconCell>
          <SubLabel>Nastavení...</SubLabel>
        </SubItem>
        <SubItem>
          <MenuIconCell $w={27}><Icon name="surfGen" size={20} /></MenuIconCell>
          <SubLabel>Generovat</SubLabel>
        </SubItem>
      </SubMenu>

      <Dialog>
        <DialogTitle>
          <span>Nastavení generování ploch z prutu</span>
          <CloseBtn>x</CloseBtn>
        </DialogTitle>
        <DialogPanel>
          <GroupGrid>
            <GroupBox>
              <GroupHead>Dělení ohnutých prutů</GroupHead>
              <GroupBody>
                <Radio on label="Automatické" />
                <Radio label="Uživatelské" />
                <FieldRow $top={3}>
                  <FieldLabel>Minimální úhel<br />dělení:</FieldLabel>
                  <Spinner />
                  <Unit>[°]</Unit>
                </FieldRow>
                <FieldRow $top={4}>
                  <FieldLabel>Minimální délka<br />dělení:</FieldLabel>
                  <Spinner />
                  <Unit>[m]</Unit>
                </FieldRow>
              </GroupBody>
            </GroupBox>
            <GroupBox>
              <GroupHead>Vytvořené plochy</GroupHead>
              <GroupBody $top={8}>
                <CheckRow>
                  <CheckMark><Tick /></CheckMark>
                  <CheckLabel>Použít průměmou<br />délku prvku sítě:</CheckLabel>
                  <Spinner off={false} value="0.025" h={20} />
                  <Unit $left={7}>[m]</Unit>
                </CheckRow>
              </GroupBody>
            </GroupBox>
            <GroupBox>
              <GroupHead>Dělení zaoblení průřezu</GroupHead>
              <GroupBody>
                <Radio on label="Automatické" />
                <Radio label="Oblouk nahradit přímkou" />
                <Radio label="Uživatelské nastavení" />
                <FieldRow $top={3}>
                  <FieldLabel>Minimální úhel<br />dělení:</FieldLabel>
                  <Spinner />
                  <Unit>[°]</Unit>
                </FieldRow>
              </GroupBody>
            </GroupBox>
            <GroupBox>
              <GroupHead>Čelní desky na koncích prutu</GroupHead>
              <GroupBody>
                <Option>
                  <CheckMark />
                  <span>Vytvořit</span>
                </Option>
                <SubBlock>
                  <PlainLine>Tloušťka čelní desky</PlainLine>
                  <Radio on muted label="Tuhá" />
                  <Option $h={20} $muted>
                    <RadioMark $muted />
                    <span>Uživatelské nastavení</span>
                  </Option>
                </SubBlock>
                <FieldRow $top={1} $left={34}>
                  <FieldLabel $w={86} $lh={19} $top={1}>Tloušťka:</FieldLabel>
                  <Spinner top={1} />
                  <Unit $left={6} $top={5} $muted>[mm]</Unit>
                </FieldRow>
              </GroupBody>
            </GroupBox>
          </GroupGrid>
          <FooterLine />
          <Footer>
            <IconButton><Icon name="help" /></IconButton>
            <IconButton><Icon name="doc" /></IconButton>
            <IconButton><Icon name="number" /></IconButton>
            <PushButton $left={244}>OK</PushButton>
            <PushButton $left={9}>Storno</PushButton>
          </Footer>
        </DialogPanel>
      </Dialog>

      <OverlaySvg viewBox="0 0 1379 784">
        <path d="M497 367L558 411" stroke="#b01414" strokeWidth="3.4" />
        <path d="M569 420L560 404L551 416z" fill="#b01414" />
        <path d="M476 370V387L480 383.5L483 390L486 388.6L483 382.5H488z" fill="#fff" stroke="#222" strokeWidth="1" />
      </OverlaySvg>
    </Screen>
  )
}
